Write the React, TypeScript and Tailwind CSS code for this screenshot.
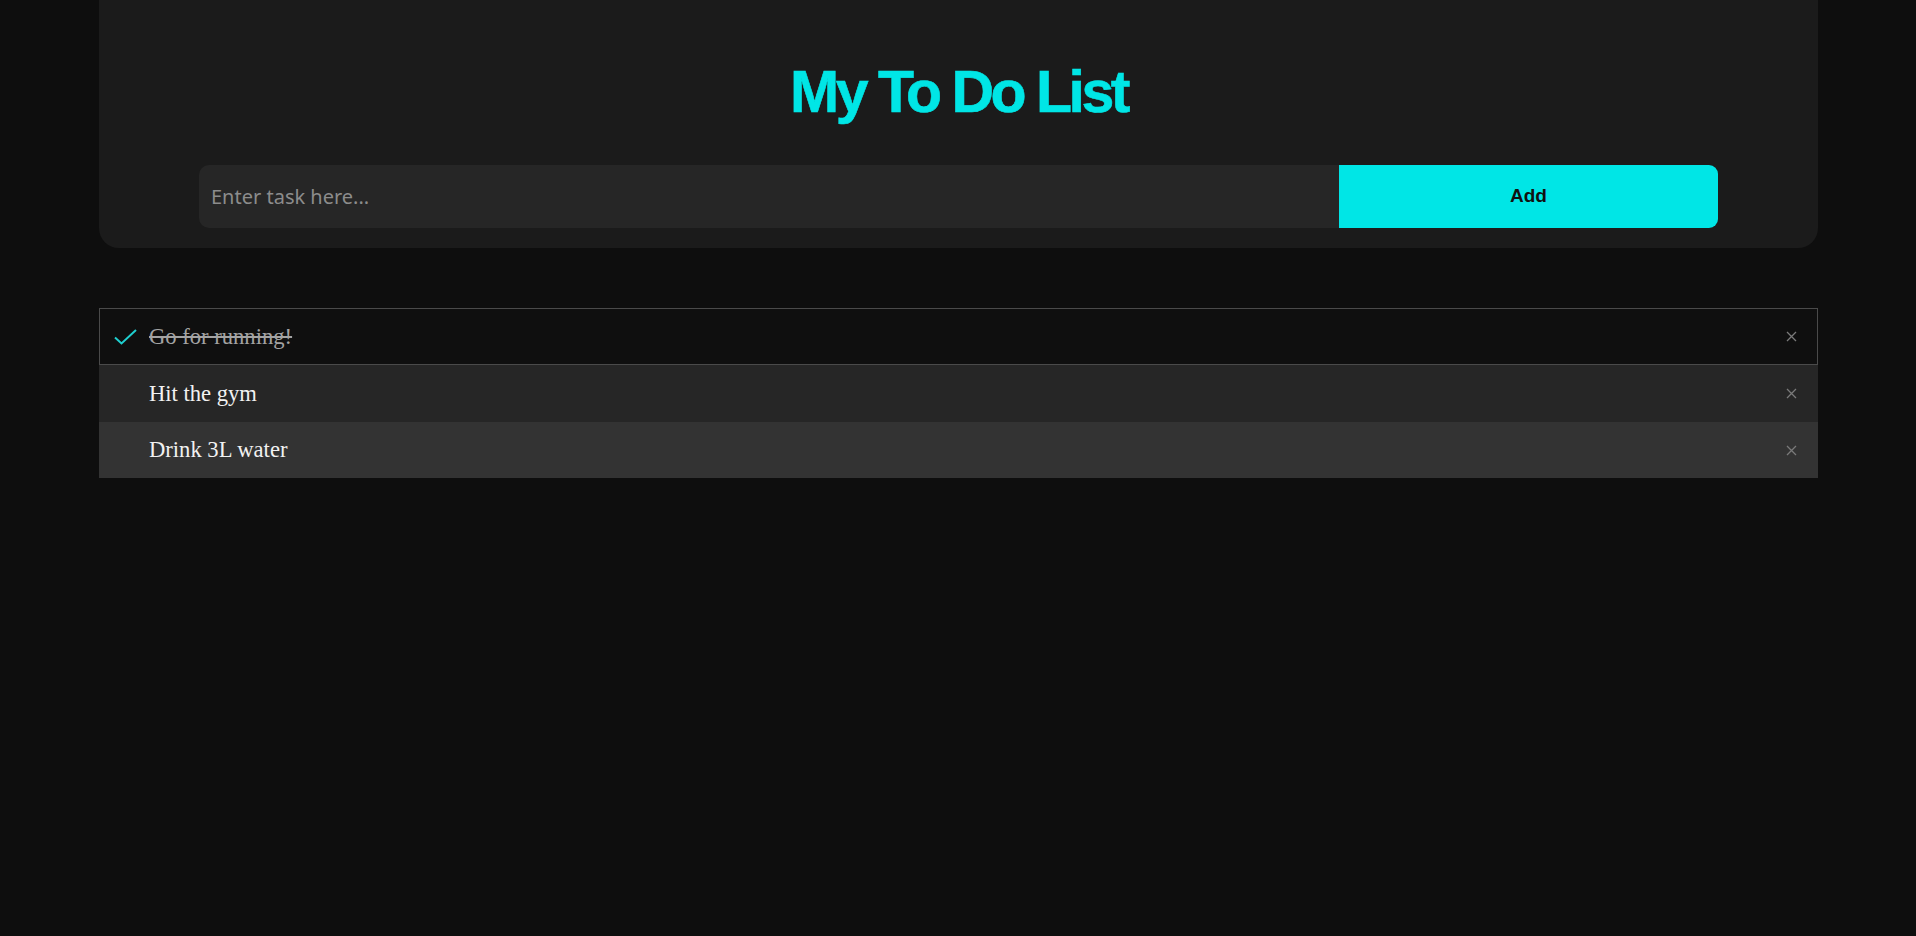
import React from "react";

const tasks = [
  { text: "Go for running!", done: true },
  { text: "Hit the gym", done: false },
  { text: "Drink 3L water", done: false },
];

function CloseIcon() {
  return (
    <svg width="11" height="11" viewBox="0 0 11 11" fill="none">
      <path d="M1 1L10 10M10 1L1 10" stroke="#7a7a7a" strokeWidth="1.3" />
    </svg>
  );
}

function CheckIcon() {
  return (
    <svg width="23" height="16" viewBox="0 0 23 16" fill="none">
      <path d="M1 8.5L7.5 14.5L22 1" stroke="#1fcfcf" strokeWidth="2" />
    </svg>
  );
}

export default function App() {
  return (
    <div className="min-h-screen w-full bg-[#0e0e0e] pl-[99px] pr-[98px]">
      <div className="flex flex-col rounded-b-[20px] bg-[#1b1b1b] px-[100px] pb-[20px] pt-[63px]">
        <h1
          className="h-[59px] text-center text-[59px] font-bold leading-none tracking-[-3.5px] text-[#00e6e6]"
          style={{ fontFamily: '"Liberation Sans", Arial, sans-serif', WebkitTextStroke: "0.6px #00e6e6" }}
        >
          My To Do List
        </h1>
        <div className="mt-[43px] flex h-[63px]">
          <input
            type="text"
            placeholder="Enter task here..."
            className="h-full flex-1 rounded-l-[10px] bg-[#262626] pl-[12px] text-[20px] text-white outline-none placeholder:text-[#8c8c8c]"
            style={{ fontFamily: '"Noto Sans", Lato, sans-serif' }}
          />
          <button
            className="h-full w-[379px] rounded-r-[9px] bg-[#00e6e6] text-[19px] font-bold text-[#111]"
            style={{ fontFamily: '"Liberation Sans", Arial, sans-serif' }}
          >
            Add
          </button>
        </div>
      </div>

      <ul className="mt-[60px] flex flex-col" style={{ fontFamily: '"Liberation Serif", "Times New Roman", serif' }}>
        {tasks.map((t, i) => (
          <li
            key={i}
            className={
              i === 0
                ? "flex h-[57px] items-center border border-[#4a4a4a] bg-[#0f0f0f] pl-[14px] pr-[20px]"
                : i === 1
                ? "flex h-[57px] items-center bg-[#262626] pl-[15px] pr-[21px]"
                : "flex h-[56px] items-center bg-[#333333] pl-[15px] pr-[21px]"
            }
          >
            <span className="flex w-[35px] items-center">{t.done ? <CheckIcon /> : null}</span>
            <span
              className={
                t.done
                  ? "flex-1 text-[22.6px] text-[#a3a3a3] line-through"
                  : "flex-1 text-[22.6px] text-[#f2f2f2]"
              }
            >
              {t.text}
            </span>
            <CloseIcon />
          </li>
        ))}
      </ul>
    </div>
  );
}
